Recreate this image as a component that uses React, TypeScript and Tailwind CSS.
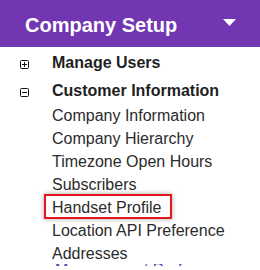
import React from "react";

const subItems = [
  "Company Information",
  "Company Hierarchy",
  "Timezone Open Hours",
  "Subscribers",
  "Handset Profile",
  "Location API Preference",
  "Addresses",
];

function BoxIcon({ open }: { open: boolean }) {
  return (
    <svg width="9" height="9" viewBox="0 0 9 9" className="mt-[4px] shrink-0">
      <rect x="0.5" y="0.5" width="8" height="8" rx="1" fill="#fff" stroke="#111" />
      <line x1="2" y1="4.5" x2="7" y2="4.5" stroke="#111" />
      {!open && <line x1="4.5" y1="2" x2="4.5" y2="7" stroke="#111" />}
    </svg>
  );
}

export default function App() {
  return (
    <div className="w-[260px] h-[270px] overflow-hidden bg-white font-['Liberation_Sans',Arial,sans-serif]">
      <div className="h-[47px] bg-[#7236b2] flex items-center justify-between pl-[25px] pr-[24px]">
        <span className="text-white font-bold text-[20px] leading-[23px] pt-[4px]">Company Setup</span>
        <svg width="13" height="7" viewBox="0 0 13 7" className="mb-[3px]">
          <polygon points="0,0 13,0 6.5,7" fill="#fff" />
        </svg>
      </div>

      <div className="pt-[1px]">
        <div className="h-[29px] flex items-center pl-[20px] gap-[23px]">
          <BoxIcon open={false} />
          <span className="font-bold text-[16px] leading-[29px] text-[#1f1f1f]">Manage Users</span>
        </div>
        <div className="h-[27px] flex items-center pl-[20px] gap-[23px]">
          <BoxIcon open={true} />
          <span className="font-bold text-[16px] leading-[27px] text-[#1f1f1f]">Customer Information</span>
        </div>

        <ul className="pl-[52px]">
          {subItems.map((item) => (
            <li key={item} className="h-[23px] text-[16px] leading-[23px] text-[#2b2b2b] whitespace-nowrap">
              {item === "Handset Profile" ? (
                <span className="relative inline-block">
                  <span className="absolute left-[-8px] top-[-2px] w-[128px] h-[25px] border-2 border-[#e3141b] shadow-[0_0_5px_rgba(0,0,0,0.35)]" />
                  <span className="relative">{item}</span>
                </span>
              ) : (
                item
              )}
            </li>
          ))}
        </ul>
        <div className="h-[2px] overflow-hidden pl-[55px] -mt-[1px]">
          <div className="-mt-[6px] text-[16px] leading-[23px] text-[#4a3fa8] whitespace-nowrap">
            Management Preferences
          </div>
        </div>
      </div>
    </div>
  );
}
